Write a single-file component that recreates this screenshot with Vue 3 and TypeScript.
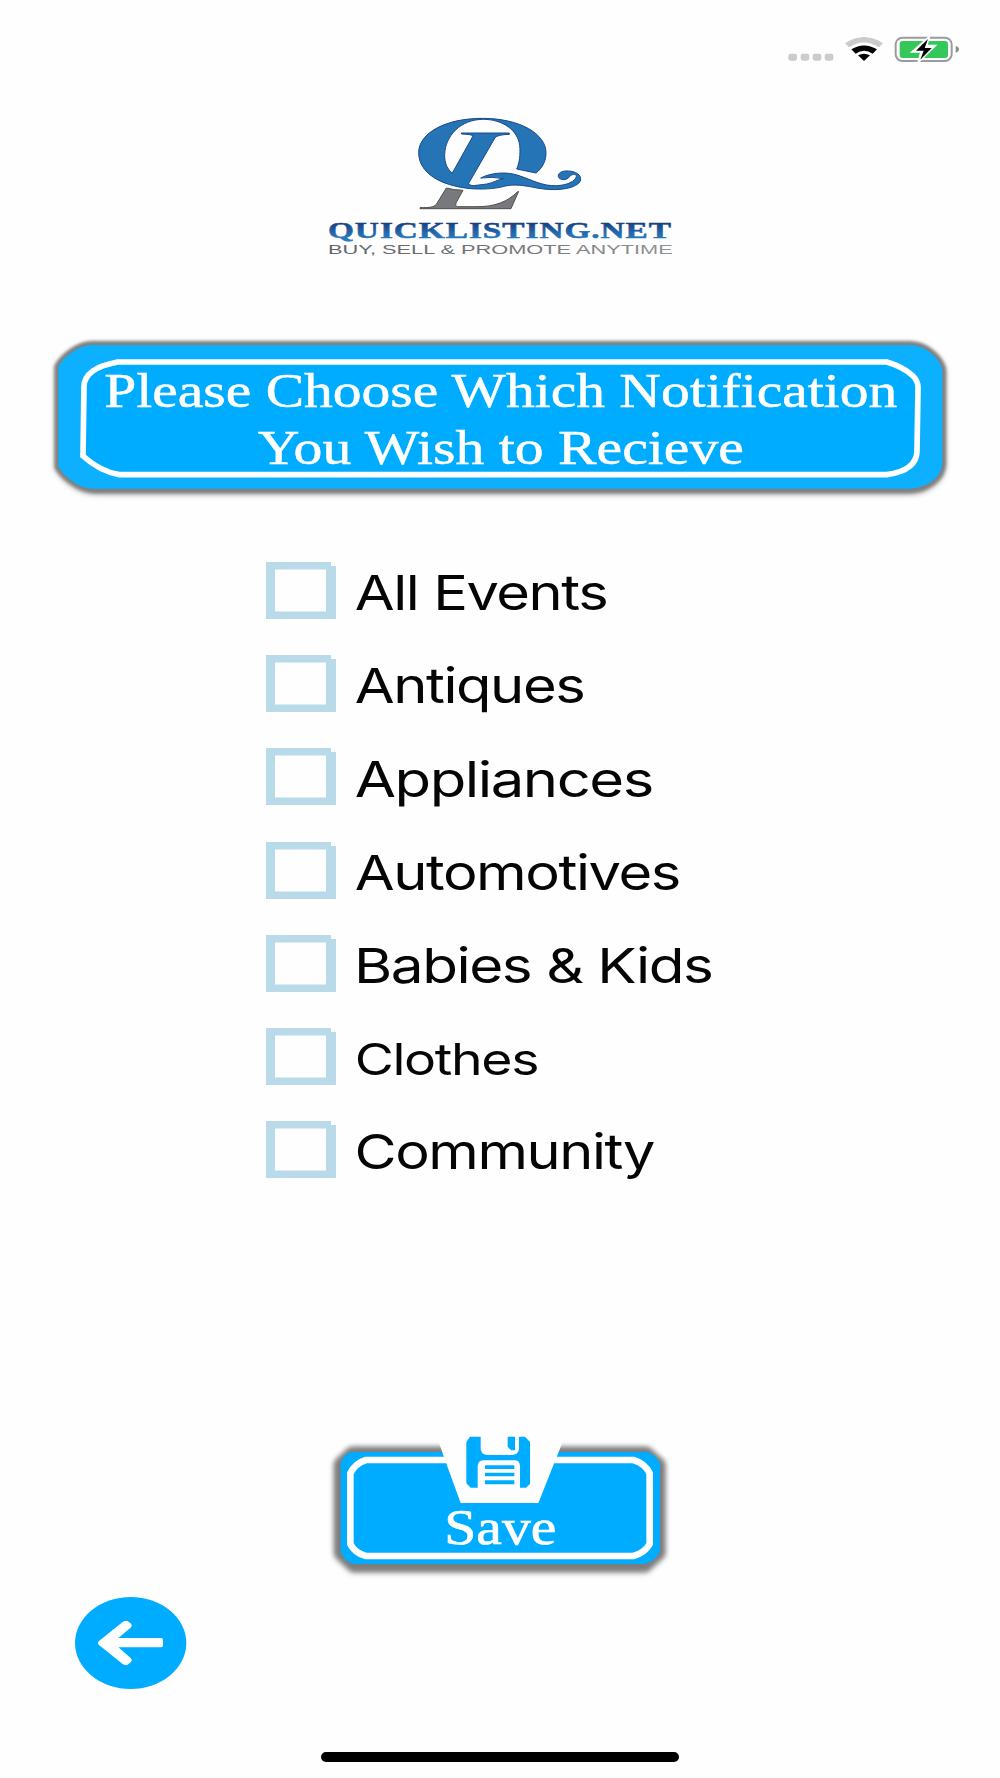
<script setup lang="ts">
import { ref } from 'vue'

interface Category {
  name: string
  x: number
  width: number
  size: number
  baseline: number
}

const categories: Category[] = [
  { name: 'All Events', x: 354.8, width: 252.5, size: 48.5, baseline: 47.8 },
  { name: 'Antiques', x: 354.8, width: 229.5, size: 48.5, baseline: 48 },
  { name: 'Appliances', x: 354.8, width: 298, size: 49, baseline: 48.9 },
  { name: 'Automotives', x: 354.8, width: 325, size: 48.5, baseline: 48.2 },
  { name: 'Babies & Kids', x: 354, width: 358.5, size: 48.5, baseline: 47.8 },
  { name: 'Clothes', x: 354.7, width: 183.5, size: 44, baseline: 46.8 },
  { name: 'Community', x: 354.5, width: 299.5, size: 48.5, baseline: 48.2 },
]

const selected = ref<string[]>([])

function toggle(name: string): void {
  selected.value = selected.value.includes(name)
    ? selected.value.filter((n) => n !== name)
    : [...selected.value, name]
}
</script>

<template>
  <main class="screen">
    <header class="status">
      <svg width="210" height="60" viewBox="0 0 630 180">
        <g fill="#cbcbcb">
          <rect x="55" y="101" width="26" height="21" rx="7" />
          <rect x="92" y="101" width="26" height="21" rx="7" />
          <rect x="128" y="101" width="26" height="21" rx="7" />
          <rect x="164" y="101" width="26" height="21" rx="7" />
        </g>
        <path d="M225 70Q282 32 339 70L327 82Q282 53 237 82Z" fill="#cbcbcb" />
        <path d="M244 88Q282 65 321 88L308 101Q282 84 257 101Z" />
        <path d="M264 106Q282 96 300 106L282 123Z" />
        <rect x="377" y="53" width="168" height="70" rx="20" fill="none" stroke="#9b9b9d" stroke-width="6" />
        <rect x="389" y="63" width="145" height="51" rx="9" fill="#34c759" />
        <path d="M557 78Q567 81 567 88T557 98Z" fill="#8d8d8f" />
        <path d="M478 50L426 96H453L444 128L496 77H470Z" fill="#fff" stroke="#fff" stroke-width="5" />
        <path d="M474 57L438 92H461L451 119L485 84H464Z" />
      </svg>
    </header>

    <section class="logo">
      <svg width="380" height="170" viewBox="0 0 1140 510">
        <defs>
          <linearGradient id="word" x1="0" y1="0" x2="0" y2="1">
            <stop offset=".2" stop-color="#183e7c" />
            <stop offset=".6" stop-color="#2368ac" />
            <stop offset="1" stop-color="#2b83c7" />
          </linearGradient>
          <linearGradient id="tag" x1="0" x2="1">
            <stop offset="0" stop-color="#626468" />
            <stop offset=".6" stop-color="#77797c" />
            <stop offset="1" stop-color="#919396" />
          </linearGradient>
        </defs>
        <g fill="#2574b5" stroke="#1b4a8c" stroke-width="3" stroke-linejoin="round">
          <path
            fill-rule="evenodd"
            d="M517 55C630 55 708 102 708 158C708 184 697 204 678 219L620 207C628 190 632 163 629 136C624 92 579 58 520 58C451 58 406 108 404 163C403 188 412 209 427 219L489 108Q486 103 454 102V99H598V103Q563 104 555 113L476 250Q478 257 490 257L531 252C551 248 565 238 580 236Q547 229 512 234C543 218 588 214 624 226C667 240 698 259 739 257C771 256 797 244 799 229C798 219 784 222 776 233C762 245 742 237 745 225C750 211 773 211 789 215C812 221 818 238 806 250C783 270 729 273 681 264C644 257 614 251 582 259C550 268 514 268 482 266C391 257 326 219 326 158C326 99 407 55 517 55Z"
          />
        </g>
        <path
          d="M409 264Q431 270 459 271L439 307Q434 319 443 320H493C557 322 594 303 622 276L626 274L603 326H330V323C360 323 371 322 379 313Z"
          fill="#77797c"
          stroke="#4f5052"
          stroke-width="3"
        />
        <text x="54" y="413" textLength="1032" lengthAdjust="spacingAndGlyphs" class="wordmark">QUICKLISTING.NET</text>
        <text x="54" y="462" textLength="1034" lengthAdjust="spacingAndGlyphs" class="tagline">BUY, SELL &amp; PROMOTE ANYTIME</text>
      </svg>
    </section>

    <section class="banner">
      <svg width="920" height="175" viewBox="0 0 2760 525">
        <path
          class="banner-shadow"
          d="M155 45H2610C2660 45 2707 92 2707 125V400C2707 442 2660 476 2610 478H165C115 478 70 435 55 410V110C70 82 115 45 155 45Z"
        />
        <path
          d="M155 45H2610C2660 45 2707 92 2707 125V400C2707 442 2660 474 2610 476H165C115 478 70 435 55 410V110C70 82 115 45 155 45Z"
          fill="#0db0ff"
        />
        <path
          d="M233 96H2540Q2590 110 2619 138Q2636 155 2634 178L2631 360Q2632 421 2540 434H238Q180 424 129 378L132 170Q132 115 233 96Z"
          fill="#00acff"
          stroke="#fff"
          stroke-width="17"
        />
        <text x="193" y="230" textLength="2379" lengthAdjust="spacingAndGlyphs" class="heading">Please Choose Which Notification</text>
        <text x="653" y="401" textLength="1459" lengthAdjust="spacingAndGlyphs" class="heading">You Wish to Recieve</text>
      </svg>
    </section>

    <ul class="list">
      <li v-for="item in categories" :key="item.name" class="row" @click="toggle(item.name)">
        <svg width="1000" height="93.25" viewBox="0 0 1000 93.25">
          <path
            d="M266 0H331V4H336V57H266ZM275 7.5V49.5H326V7.5Z"
            fill="#b8dae9"
            fill-rule="evenodd"
          />
          <path v-if="selected.includes(item.name)" d="M284 28L297 41L318 15" fill="none" stroke="#00acff" stroke-width="6" />
          <text
            :x="item.x"
            :y="item.baseline"
            :font-size="item.size"
            :textLength="item.width"
            lengthAdjust="spacingAndGlyphs"
            class="label"
          >{{ item.name }}</text>
        </svg>
      </li>
    </ul>

    <section class="save">
      <svg width="360" height="165" viewBox="0 0 1080 495" role="button">
        <path class="save-shadow" d="M95 96H980L1020 132V400L975 440H100L58 400V130Z" />
        <path d="M95 96H980Q1008 102 1020 132V394Q1009 422 975 432H100Q70 424 62 394V130Q69 103 95 96Z" fill="#00acff" />
        <path
          d="M138 120H940Q975 130 989 160V372Q975 398 940 408H138Q105 400 91 372V160Q105 130 138 120Z"
          fill="none"
          stroke="#fff"
          stroke-width="20"
        />
        <path d="M354 60H730L715 98L655 249H422L377 125Z" fill="#fefefe" />
        <path d="M450 50H482V88Q484 103 500 105H578Q595 103 597 88V50H615L630 66V192L618 203H600V137Q598 121 584 121H492Q475 121 473 137V203H452L439 190V66Z" fill="#00acff" />
        <path d="M563 50H585V91H573L563 80ZM495 136H583V147H495ZM495 158H583V169H495ZM495 181H583V193H495Z" fill="#00acff" />
        <text x="373" y="373" textLength="336" lengthAdjust="spacingAndGlyphs" class="save-text">Save</text>
      </svg>
    </section>

    <nav class="back">
      <svg width="140" height="120" viewBox="0 0 420 360" role="button">
        <ellipse cx="212" cy="189" rx="167" ry="138" fill="#00acff" />
        <path
          d="M116 184L187 127Q195 119 203 124L212 130Q219 137 211 144L175 174H303Q309 174 309 180V196Q309 202 303 202H175L211 233Q219 240 212 247L203 254Q195 258 187 251L116 194Q111 189 116 184Z"
          fill="#fff"
        />
      </svg>
    </nav>

    <footer class="home"><span class="home-bar"></span></footer>
  </main>
</template>

<style>
body {
  margin: 0;
  background: #fefefe;
}
</style>

<style scoped>
.screen {
  width: 1000px;
  height: 1778px;
  display: flex;
  flex-direction: column;
  background: #fefefe;
  overflow: hidden;
}
svg {
  display: block;
  flex: none;
}
.status {
  display: flex;
  justify-content: flex-end;
  height: 60px;
  padding: 20px 20px;
}
.logo {
  display: flex;
  justify-content: center;
  height: 170px;
}
.wordmark {
  font: bold 69px "Liberation Serif", serif;
  letter-spacing: 2px;
  fill: url(#word);
  stroke: url(#word);
  stroke-width: 1.5px;
}
.tagline {
  font: 41px "Liberation Sans", sans-serif;
  fill: url(#tag);
}
.banner {
  display: flex;
  justify-content: center;
  margin-top: 60px;
  height: 175px;
}
.banner-shadow {
  fill: #808080;
  stroke: #808080;
  stroke-width: 22px;
  filter: blur(5px) drop-shadow(0 5px 7px rgba(0, 0, 0, 0.35));
}
.heading {
  font: 146px "Liberation Serif", serif;
  fill: #fff;
  stroke: #fff;
  stroke-width: 1.5px;
}
.list {
  list-style: none;
  margin: 56.8px 0 0;
  padding: 0;
}
.row {
  height: 93.25px;
}
.row svg {
  overflow: visible;
}
.label {
  font-family: Inter, sans-serif;
  letter-spacing: -0.025em;
  fill: #050505;
}
.save {
  display: flex;
  justify-content: center;
  height: 165px;
  margin-top: 205.5px;
}
.save-shadow {
  fill: #7c7c7c;
  stroke: #7c7c7c;
  stroke-width: 28px;
  stroke-linejoin: round;
  filter: blur(8px) drop-shadow(0 3px 7px rgba(0, 0, 0, 0.35));
}
.save-text {
  font: 150px "Liberation Serif", serif;
  fill: #fff;
  stroke: #fff;
  stroke-width: 2px;
}
.back {
  display: flex;
  height: 120px;
  margin-top: -5px;
  padding-left: 60px;
}
.home {
  display: flex;
  justify-content: center;
  padding-top: 52px;
}
.home-bar {
  width: 358px;
  height: 10px;
  border-radius: 5px;
  background: #000;
}
</style>
